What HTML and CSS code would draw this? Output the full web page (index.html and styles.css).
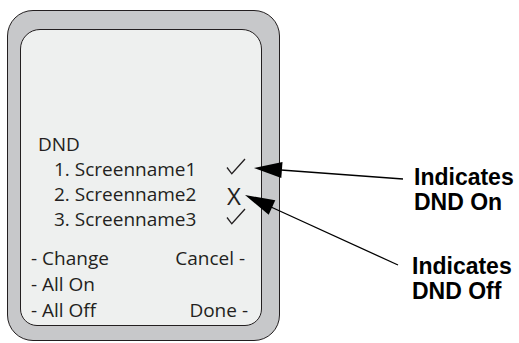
FILE: index.html
```html
<!DOCTYPE html>
<html>

<head>
    <title>DND Screen</title>
    <link rel="stylesheet" href="styles.css">
</head>

<body>
    <div class="stage">
        <!-- Phone bezel with the screen inside -->
        <div class="phone">
            <div class="screen">
                <div class="menu">
                    <div class="menu-title">DND</div>
                    <div class="menu-list">
                        <span>1. Screenname1</span>
                        <span class="mark">
                            <svg width="20" height="17" viewBox="0 0 20 17">
                                <path d="M1 9.5 L5.8 15.8 L19 1" fill="none" stroke="#231f20" stroke-width="1.3" />
                            </svg>
                        </span>
                        <span>2. Screenname2</span>
                        <span class="mark mark-x">X</span>
                        <span>3. Screenname3</span>
                        <span class="mark">
                            <svg width="20" height="17" viewBox="0 0 20 17">
                                <path d="M1 9.5 L5.8 15.8 L19 1" fill="none" stroke="#231f20" stroke-width="1.3" />
                            </svg>
                        </span>
                    </div>
                </div>
                <div class="softkeys">
                    <span>- Change</span>
                    <span class="key-right">Cancel -</span>
                    <span>- All On</span>
                    <span></span>
                    <span>- All Off</span>
                    <span class="key-right key-done">Done -</span>
                </div>
            </div>
        </div>

        <div class="labels">
            <p class="label label-on">Indicates<br>DND On</p>
            <p class="label label-off">Indicates<br>DND Off</p>
        </div>

        <!-- Callout arrows lie over the phone -->
        <svg class="arrows" width="519" height="343" viewBox="0 0 519 343">
            <line x1="281" y1="170" x2="403" y2="179" stroke="#000" stroke-width="1.3" />
            <polygon points="254,168 281.3,178.1 282.5,162.1" fill="#000" />
            <line x1="271" y1="207" x2="398" y2="265" stroke="#000" stroke-width="1.3" />
            <polygon points="245,195 268.7,214.8 275.3,200.2" fill="#000" />
        </svg>
    </div>
</body>

</html>
```

FILE: styles.css
```css
body {
    margin: 0;
    background-color: #fff;
    color: #231f20;
    font-family: "Open Sans", sans-serif;
}

.stage {
    position: relative;
    display: flex;
    width: 519px;
    height: 343px;
}

.phone {
    box-sizing: border-box;
    width: 273px;
    height: 331px;
    margin: 10px 0 0 7px;
    padding: 17.5px 16.5px 13.5px 11.5px;
    background-color: #c7c8ca;
    border: 1.5px solid #231f20;
    border-radius: 26px;
}

.screen {
    box-sizing: border-box;
    display: flex;
    flex-direction: column;
    gap: 13px;
    width: 242px;
    height: 297px;
    padding: 102.5px 15.5px 0 10.5px;
    background-color: #eef0ef;
    border: 1.5px solid #231f20;
    border-radius: 20px 20px 17px 17px;
    font-size: 19px;
}

.menu {
    line-height: 25px;
}

.menu-title {
    padding-left: 7px;
}

.menu-list {
    display: grid;
    grid-template-columns: 172px 20px;
    grid-auto-rows: 25px;
    padding-left: 23px;
}

.mark svg {
    display: block;
    margin-top: 1px;
}

.mark-x {
    font-size: 24px;
    line-height: 27px;
    padding-left: 1px;
}

.softkeys {
    display: grid;
    grid-template-columns: 1fr auto;
    grid-auto-rows: 26px;
    line-height: 26px;
}

.key-right {
    text-align: right;
}

.key-done {
    margin-right: -3px;
}

.labels {
    display: flex;
    flex-direction: column;
    gap: 40px;
    margin-left: 132px;
    padding-top: 165px;
}

.label {
    margin: 0;
    color: #000;
    font-family: "Liberation Sans", Arial, sans-serif;
    font-weight: bold;
    font-size: 23px;
    line-height: 24.5px;
}

.label-on {
    padding-left: 2px;
}

.arrows {
    position: absolute;
    top: 0;
    left: 0;
    pointer-events: none;
}
```
